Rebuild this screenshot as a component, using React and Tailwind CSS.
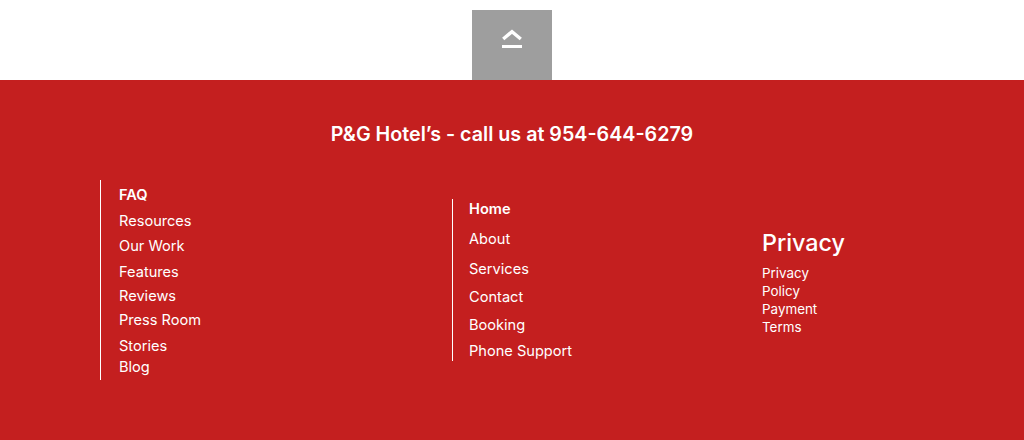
import React from 'react';

const firstCol = [
  { label: 'FAQ', cls: 'font-semibold' },
  { label: 'Resources', cls: 'mt-[6px]' },
  { label: 'Our Work', cls: 'mt-[5px]' },
  { label: 'Features', cls: 'mt-[6px]' },
  { label: 'Reviews', cls: 'mt-[4px]' },
  { label: 'Press Room', cls: 'mt-[4px]' },
  { label: 'Stories', cls: 'mt-[6px]' },
  { label: 'Blog', cls: 'mt-[1px]' },
];

const secondCol = [
  { label: 'Home', cls: 'font-semibold' },
  { label: 'About', cls: 'mt-[10px]' },
  { label: 'Services', cls: 'mt-[10px]' },
  { label: 'Contact', cls: 'mt-[8px]' },
  { label: 'Booking', cls: 'mt-[8px]' },
  { label: 'Phone Support', cls: 'mt-[6px]' },
];

const privacyLinks = ['Privacy', 'Policy', 'Payment', 'Terms'];

export default function App() {
  return (
    <div className="w-[1024px] h-[440px] bg-white font-['Inter',sans-serif] text-white overflow-hidden">
      {/* back to top */}
      <div className="h-[80px] flex justify-center items-end">
        <button className="w-[80px] h-[70px] bg-[#9e9e9e] flex justify-center pt-[19px]">
          <svg width="22" height="20" viewBox="0 0 22 20">
            <path d="M2.2 10 L11 2.6 L19.8 10" fill="none" stroke="white" strokeWidth="3.4" />
            <rect x="1" y="16" width="20" height="3" fill="white" />
          </svg>
        </button>
      </div>

      {/* footer */}
      <footer className="h-[360px] bg-[#c41f1f]">
        <h2 className="pt-[41px] text-center text-[19.7px] leading-[26px] font-semibold">
          P&amp;G Hotel’s - call us at 954-644-6279
        </h2>

        <div className="mt-[33px] flex items-center pl-[100px]">
          <ul className="w-[352px] border-l border-white pl-[18px] pt-[5px] pb-[3px] text-[14.6px] leading-[20px]">
            {firstCol.map((item) => (
              <li key={item.label} className={item.cls}>{item.label}</li>
            ))}
          </ul>

          <ul className="w-[310px] border-l border-white pl-[16px] text-[14.6px] leading-[20px]">
            {secondCol.map((item) => (
              <li key={item.label} className={item.cls}>{item.label}</li>
            ))}
          </ul>

          <div className="pt-[5px]">
            <h3 className="text-[23.3px] leading-[28px] font-medium">Privacy</h3>
            <ul className="mt-[7px] text-[13.4px] leading-[18px]">
              {privacyLinks.map((l) => (
                <li key={l}>{l}</li>
              ))}
            </ul>
          </div>
        </div>
      </footer>
    </div>
  );
}
